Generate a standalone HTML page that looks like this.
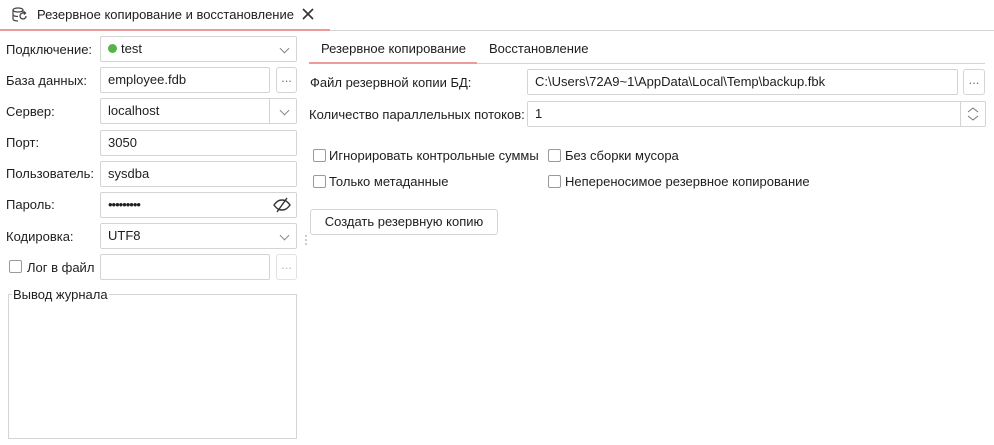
<!DOCTYPE html>
<html><head><meta charset="utf-8"><style>
*{box-sizing:border-box;margin:0;padding:0}
body{width:994px;height:445px;background:#fff;font-family:"Liberation Sans",sans-serif;font-size:13px;color:#1e1e1e;position:relative;overflow:hidden}
.a{position:absolute}
.inp{position:absolute;border:1px solid #d4d4d4;border-radius:2px;background:#fff;height:26px;padding-left:7px;line-height:24px}
.btn{position:absolute;border:1px solid #d4d4d4;border-radius:3px;background:#fff;height:26px;text-align:center;line-height:20px;color:#777}
.lbl{position:absolute;line-height:16px}
.cb{position:absolute;width:13px;height:13px;border:1px solid #9a9a9a;border-radius:2px;background:#fff}
.chev{position:absolute;right:8px;top:8px;width:7px;height:7px;border-right:1px solid #888;border-bottom:1px solid #888;transform:rotate(45deg)}
</style></head><body>
<svg class="a" style="left:11px;top:7px" width="18" height="16" viewBox="0 0 18 16"><ellipse cx="7" cy="3" rx="5" ry="2" fill="none" stroke="#444" stroke-width="1.2"/><path d="M2 3v9c0 1.2 2.2 2 5 2M12 3v3M2 7.5c0 1.2 2.2 2 5 2" fill="none" stroke="#444" stroke-width="1.2"/><path d="M15 9a3 3 0 1 1-3-3h2M13 4.5l1.5 1.5-1.5 1.5" fill="none" stroke="#444" stroke-width="1.3"/></svg>
<div class="lbl" style="left:37px;top:7px">Резервное копирование и восстановление</div>
<svg class="a" style="left:301px;top:7px" width="14" height="14"><path d="M2 2l10 10M12 2L2 12" stroke="#333" stroke-width="1.6"/></svg>
<div class="a" style="left:0;top:29px;width:330px;height:2px;background:#ef9a9a"></div>
<div class="a" style="left:330px;top:30px;width:664px;height:1px;background:#d4d4d4"></div>

<div class="lbl" style="left:6px;top:42px">Подключение:</div>
<div class="inp" style="left:100px;top:36px;width:197px"><span style="display:inline-block;width:9px;height:9px;border-radius:50%;background:#56b34a;margin-right:4px"></span>test<div class="chev"></div></div>
<div class="lbl" style="left:6px;top:73px">База данных:</div>
<div class="inp" style="left:100px;top:67px;width:170px">employee.fdb</div>
<div class="btn" style="left:276px;top:67px;width:21px">...</div>
<div class="lbl" style="left:6px;top:104px">Сервер:</div>
<div class="inp" style="left:100px;top:98px;width:197px">localhost<div class="a" style="left:168px;top:0;width:1px;height:24px;background:#d4d4d4"></div><div class="chev"></div></div>
<div class="lbl" style="left:6px;top:135px">Порт:</div>
<div class="inp" style="left:100px;top:130px;width:197px">3050</div>
<div class="lbl" style="left:6px;top:166px">Пользователь:</div>
<div class="inp" style="left:100px;top:161px;width:197px">sysdba</div>
<div class="lbl" style="left:6px;top:197px">Пароль:</div>
<div class="inp" style="left:100px;top:192px;width:197px;letter-spacing:-1px">•••••••••<svg class="a" style="right:4px;top:4px" width="20" height="16"><path d="M2 8c3-4 5-5 8-5s5 1 8 5c-3 4-5 5-8 5S5 12 2 8z" fill="none" stroke="#333" stroke-width="1.4"/><path d="M15 1L5 15" stroke="#333" stroke-width="1.4"/></svg></div>
<div class="lbl" style="left:6px;top:229px">Кодировка:</div>
<div class="inp" style="left:100px;top:223px;width:197px">UTF8<div class="chev"></div></div>
<div class="a" style="left:305px;top:234px;width:2px;height:12px;background:radial-gradient(circle,#bbb 1px,transparent 1px) 0 0/2px 4px"></div>
<div class="cb" style="left:9px;top:260px"></div>
<div class="lbl" style="left:27px;top:260px">Лог в файл</div>
<div class="inp" style="left:100px;top:254px;width:170px"></div>
<div class="btn" style="left:276px;top:254px;width:21px;color:#bbb;border-color:#e2e2e2">...</div>
<div class="a" style="left:8px;top:294px;width:289px;height:145px;border:1px solid #d4d4d4"></div>
<div class="lbl" style="left:12px;top:287px;background:#fff;padding:0 1px">Вывод журнала</div>

<div class="lbl" style="left:321px;top:41px">Резервное копирование</div>
<div class="lbl" style="left:489px;top:41px">Восстановление</div>
<div class="a" style="left:309px;top:62px;width:168px;height:2px;background:#ef9a9a"></div>
<div class="a" style="left:477px;top:63px;width:508px;height:1px;background:#d4d4d4"></div>
<div class="lbl" style="left:310px;top:75px">Файл резервной копии БД:</div>
<div class="inp" style="left:527px;top:69px;width:431px">C:\Users\72A9~1\AppData\Local\Temp\backup.fbk</div>
<div class="btn" style="left:963px;top:69px;width:22px">...</div>
<div class="lbl" style="left:309px;top:107px">Количество параллельных потоков:</div>
<div class="inp" style="left:527px;top:101px;width:459px">1<div class="a" style="right:24px;top:0;width:1px;height:24px;background:#d4d4d4"></div><svg class="a" style="right:6px;top:4px" width="12" height="16"><path d="M1 6l5-4 5 4M1 10l5 4 5-4" fill="none" stroke="#777"/></svg></div>
<div class="cb" style="left:313px;top:149px"></div>
<div class="lbl" style="left:329px;top:148px">Игнорировать контрольные суммы</div>
<div class="cb" style="left:548px;top:149px"></div>
<div class="lbl" style="left:565px;top:148px">Без сборки мусора</div>
<div class="cb" style="left:313px;top:175px"></div>
<div class="lbl" style="left:329px;top:174px">Только метаданные</div>
<div class="cb" style="left:548px;top:175px"></div>
<div class="lbl" style="left:565px;top:174px">Непереносимое резервное копирование</div>
<div class="btn" style="left:310px;top:209px;width:188px;color:#1e1e1e;line-height:24px">Создать резервную копию</div>
</body></html>
